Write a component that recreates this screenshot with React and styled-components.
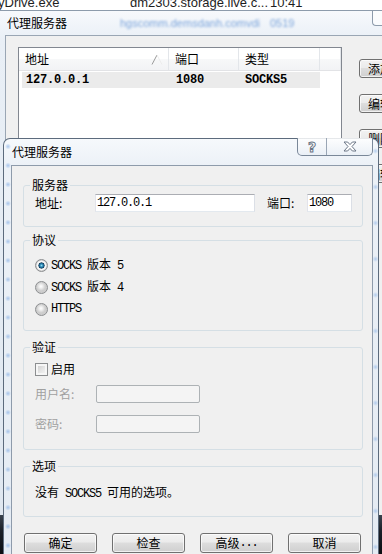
import React from "react";
import styled, { createGlobalStyle } from "styled-components";

const CJK = `"Noto Sans CJK SC", "Microsoft YaHei", sans-serif`;
const MONO = `"Liberation Mono", "Noto Sans CJK SC", monospace`;

const Global = createGlobalStyle`
  html, body { margin: 0; padding: 0; background: #fff; }
  body { font-family: ${CJK}; font-size: 12px; color: #000; }
  * { box-sizing: border-box; }
`;

const Desktop = styled.div`
  position: relative;
  width: 382px;
  height: 554px;
  overflow: hidden;
  background: #fff;
`;

/* ---------- list behind everything ---------- */
const BehindList = styled.div`
  height: 10px;
  overflow: hidden;
  display: grid;
  grid-template-columns: 132px 140px auto;
  margin-left: -2px;
  font-family: "Liberation Sans", Arial, sans-serif;
  font-size: 13px;
  line-height: 15px;
  color: #1e1e1e;
`;
const BehindCell = styled.span`
  display: block;
  margin-top: -5px;
  white-space: nowrap;
`;

/* ---------- back window ---------- */
const BackWindow = styled.div`
  width: 460px;
  height: 505px;
  margin-left: -3px;
  border-top: 1px solid #8d9bab;
  border-left: 1px solid #8d9bab;
  background: linear-gradient(180deg, #f7f9fc 0%, #e9eff6 30px, #dfe7f0 100%);
  padding-left: 7px;
  display: flex;
  flex-direction: column;
`;
const BackTitle = styled.div`
  height: 24px;
  display: grid;
  grid-template-columns: 113px 150px 102px auto;
  align-items: center;
  padding-left: 2px;
`;
const TitleText = styled.span`
  font-family: ${CJK};
  font-size: 12px;
  line-height: 16px;
  color: #000;
  white-space: nowrap;
`;
const BlurText = styled.span`
  font-family: "Liberation Sans", Arial, sans-serif;
  font-size: 11px;
  color: #7fa7dc;
  filter: blur(1.1px);
  white-space: nowrap;
`;
const CaptionStub = styled.span`
  align-self: start;
  width: 30px;
  height: 15px;
  border: 1px solid #8d9bab;
  border-top: none;
  border-right: none;
  border-radius: 0 0 0 4px;
  background: rgba(255, 255, 255, 0.6);
`;
const BackClient = styled.div`
  flex: 1;
  border-top: 1px solid #9aa6b4;
  border-left: 1px solid #9aa6b4;
  background: #f0f0f0;
  padding: 11px 0 0 12px;
  display: flex;
  align-items: flex-start;
  gap: 17px;
`;
const ListView = styled.div`
  width: 324px;
  height: 150px;
  flex: none;
  border: 1px solid #828790;
  background: #fff;
`;
const LvHeader = styled.div`
  display: grid;
  grid-template-columns: 150px 70px 81px 1fr;
  height: 23px;
  border-bottom: 1px solid #e2e3e6;
  background: linear-gradient(180deg, #ffffff 0%, #ffffff 50%, #f7f8f9 50%, #f2f3f5 100%);
`;
const LvHeadCell = styled.div`
  display: flex;
  align-items: center;
  justify-content: space-between;
  padding: 0 5px 0 6px;
  border-right: 1px solid #e3e6ea;
  font-size: 12px;
  line-height: 16px;
`;
const LvRow = styled.div`
  display: grid;
  grid-template-columns: 147px 70px 81px;
  width: 298px;
  height: 16px;
  margin: 1px 0 0 3px;
  background: #ebebeb;
  font-family: ${MONO};
  font-weight: bold;
  font-size: 12px;
  letter-spacing: -0.2px;
  line-height: 16px;
`;
const LvCell = styled.span`
  padding-left: ${(p) => p.$pad}px;
  white-space: nowrap;
`;
const BackButtons = styled.div`
  display: flex;
  flex-direction: column;
  flex: none;
  gap: 16px;
  margin-top: 12px;
`;

const WinButton = styled.div`
  width: ${(p) => p.$w}px;
  height: ${(p) => p.$h}px;
  flex: none;
  border: 1px solid #707070;
  border-radius: 3px;
  background: linear-gradient(180deg, #f2f2f2 0%, #ebebeb 45%, #dddddd 50%, #cfcfcf 100%);
  box-shadow: inset 0 0 0 1px rgba(255, 255, 255, 0.7);
  display: flex;
  align-items: center;
  justify-content: ${(p) => (p.$start ? "flex-start" : "center")};
  padding-left: ${(p) => (p.$start ? 8 : 0)}px;
  font-family: ${CJK};
  font-size: 12px;
  line-height: 16px;
  color: #000;
  white-space: nowrap;
`;

const Taskbar = styled.div`
  height: 39px;
  background: linear-gradient(180deg, #3a434e 0%, #1a2029 40%, #0b0e12 100%);
`;

/* ---------- front dialog ---------- */
const Dialog = styled.div`
  position: absolute;
  left: 3px;
  top: 138px;
  width: 376px;
  height: 430px;
  border: 1px solid #5c6b7d;
  border-bottom: none;
  border-radius: 7px 7px 0 0;
  background:
    radial-gradient(circle, rgba(110, 160, 225, 0.55) 0, rgba(110, 160, 225, 0) 3px) 1px 112px / 6px 19px repeat-y,
    radial-gradient(circle, rgba(110, 160, 225, 0.45) 0, rgba(110, 160, 225, 0) 3px) right 0 top 210px / 5px 36px repeat-y,
    linear-gradient(180deg, #f6f9fc 0%, #ecf1f7 26px, #e4ebf3 100%);
  padding: 0 5px 0 7px;
  display: flex;
  flex-direction: column;
`;
const TitleBar = styled.div`
  height: 26px;
  display: flex;
  justify-content: space-between;
  align-items: flex-start;
`;
const DlgTitle = styled.span`
  padding-left: 1px;
  font-family: ${CJK};
  font-size: 12px;
  line-height: 26px;
  color: #000;
`;
const CaptionButtons = styled.div`
  display: flex;
  height: 18px;
  margin-top: -1px;
  border: 1px solid #7a8899;
  border-top: none;
  border-radius: 0 0 5px 5px;
  overflow: hidden;
  background: linear-gradient(180deg, rgba(255, 255, 255, 0.85), rgba(232, 238, 245, 0.7));
`;
const CapBtn = styled.div`
  width: ${(p) => p.$w}px;
  height: 100%;
  display: flex;
  align-items: center;
  justify-content: center;
  border-left: ${(p) => (p.$divider ? "1px solid #9aa6b5" : "none")};
`;
const HelpGlyph = styled.span`
  font-family: "DejaVu Sans", sans-serif;
  font-weight: bold;
  font-size: 14px;
  line-height: 14px;
  color: #ffffff;
  -webkit-text-stroke: 1px #6b7686;
`;

const Client = styled.div`
  flex: 1;
  border: 1px solid #8e9bab;
  border-bottom: none;
  background: #f0f0f0;
  padding: 12px 9px 0 11px;
  display: flex;
  flex-direction: column;
`;

const Group = styled.fieldset`
  margin: ${(p) => p.$mt}px 0 0 0;
  border: 1px solid #d5dfe5;
  border-radius: 3px;
  padding: ${(p) => p.$pt}px 10px ${(p) => p.$pb}px 11px;
  min-width: 0;
`;
const Legend = styled.legend`
  padding: 0 2px;
  margin-left: -5px;
  font-family: ${CJK};
  font-size: 12px;
  line-height: 14px;
  color: #000;
`;

const FieldRow = styled.div`
  display: flex;
  align-items: center;
  height: ${(p) => p.$h || 18}px;
  margin-top: ${(p) => p.$mt || 0}px;
`;
const Label = styled.span`
  width: ${(p) => p.$w}px;
  flex: none;
  font-family: ${CJK};
  font-size: 12px;
  line-height: 16px;
  color: ${(p) => (p.$disabled ? "#a0a0a0" : "#000")};
  white-space: nowrap;
`;
const Field = styled.div`
  width: ${(p) => p.$w}px;
  height: 18px;
  flex: none;
  border: 1px solid;
  border-color: ${(p) => (p.$disabled ? "#adb2b5" : "#abadb3 #dbdfe6 #e3e9ef #e2e3ea")};
  border-radius: ${(p) => (p.$disabled ? 2 : 0)}px;
  background: ${(p) => (p.$disabled ? "#f4f4f4" : "#fff")};
  padding-left: 1px;
  font-family: ${MONO};
  font-size: 12px;
  letter-spacing: -1.2px;
  line-height: 16px;
  color: #000;
  white-space: nowrap;
`;
const Gap = styled.span`
  width: ${(p) => p.$w}px;
  flex: none;
`;

const Lat = styled.span`
  font-family: ${MONO};
  font-size: 12px;
  letter-spacing: -1.2px;
  white-space: pre;
`;

const OptionRow = styled.div`
  display: flex;
  align-items: center;
  height: 22px;
  font-family: ${CJK};
  font-size: 12px;
  line-height: 16px;
`;
const Radio = styled.span`
  width: 13px;
  height: 13px;
  flex: none;
  margin-right: 3px;
  border-radius: 50%;
  border: 1px solid #8c8e90;
  background: ${(p) =>
    p.$checked
      ? "radial-gradient(circle closest-side at 50% 50%, #8fdcf0 0, #2a86b4 28%, #123f5f 52%, #e9e9e9 60%, #fbfbfb 76%, #c9c9c9 100%)"
      : "radial-gradient(circle closest-side at 45% 40%, #ffffff 0, #ececec 45%, #cdcdcd 100%)"};
`;
const CheckBox = styled.span`
  width: 13px;
  height: 13px;
  flex: none;
  margin-right: 3px;
  border: 1px solid #8c8e90;
  background: linear-gradient(135deg, #c9c9c9 0%, #e6e6e6 55%, #f8f8f8 100%);
  box-shadow: inset 0 0 0 2px #f6f6f6;
`;
const InfoText = styled.div`
  height: 16px;
  font-family: ${CJK};
  font-size: 12px;
  line-height: 16px;
  white-space: nowrap;
`;

const ButtonRow = styled.div`
  display: flex;
  justify-content: space-between;
  margin: 16px 2px 0 1px;
`;

function SortArrow() {
  return (
    <svg width="12" height="11" viewBox="0 0 12 11">
      <line x1="1" y1="10.5" x2="6" y2="1" stroke="#9a9a9a" strokeWidth="1" />
      <line x1="6" y1="1" x2="11" y2="10.5" stroke="#ececec" strokeWidth="1" />
    </svg>
  );
}

function CloseGlyph() {
  return (
    <svg width="14" height="11" viewBox="-1 -1 14 11">
      <polygon
        points="0,0 3.6,0 6,2.6 8.4,0 12,0 8,4.5 12,9 8.4,9 6,6.4 3.6,9 0,9 4,4.5"
        fill="#ffffff"
        stroke="#6b7686"
        strokeWidth="1"
        strokeLinejoin="round"
      />
    </svg>
  );
}

export default function App() {
  return (
    <>
      <Global />
      <Desktop>
        <BehindList>
          <BehindCell>yDrive.exe</BehindCell>
          <BehindCell>dm2303.storage.live.c...</BehindCell>
          <BehindCell>10:41</BehindCell>
        </BehindList>

        <BackWindow>
          <BackTitle>
            <TitleText>代理服务器</TitleText>
            <BlurText>hgscomm.demsdanh.comvdi</BlurText>
            <BlurText>0519</BlurText>
            <CaptionStub />
          </BackTitle>
          <BackClient>
            <ListView>
              <LvHeader>
                <LvHeadCell>
                  <span>地址</span>
                  <SortArrow />
                </LvHeadCell>
                <LvHeadCell>端口</LvHeadCell>
                <LvHeadCell>类型</LvHeadCell>
                <LvHeadCell />
              </LvHeader>
              <LvRow>
                <LvCell $pad={4}>127.0.0.1</LvCell>
                <LvCell $pad={7}>1080</LvCell>
                <LvCell $pad={6}>SOCKS5</LvCell>
              </LvRow>
            </ListView>
            <BackButtons>
              <WinButton $w={80} $h={19} $start>添加...</WinButton>
              <WinButton $w={80} $h={19} $start>编辑...</WinButton>
              <WinButton $w={80} $h={19} $start>删除</WinButton>
              <WinButton $w={80} $h={19} $start>编辑规则</WinButton>
            </BackButtons>
          </BackClient>
        </BackWindow>
        <Taskbar />

        <Dialog>
          <TitleBar>
            <DlgTitle>代理服务器</DlgTitle>
            <CaptionButtons>
              <CapBtn $w={28}>
                <HelpGlyph>?</HelpGlyph>
              </CapBtn>
              <CapBtn $w={46} $divider>
                <CloseGlyph />
              </CapBtn>
            </CaptionButtons>
          </TitleBar>

          <Client>
            <Group $mt={0} $pt={2} $pb={14}>
              <Legend>服务器</Legend>
              <FieldRow>
                <Label $w={60}>地址:</Label>
                <Field $w={160}>127.0.0.1</Field>
                <Gap $w={12} />
                <Label $w={40}>端口:</Label>
                <Field $w={45}>1080</Field>
              </FieldRow>
            </Group>

            <Group $mt={6} $pt={7} $pb={10}>
              <Legend>协议</Legend>
              <OptionRow>
                <Radio $checked />
                <span>
                  <Lat>SOCKS </Lat>版本<Lat> 5</Lat>
                </span>
              </OptionRow>
              <OptionRow>
                <Radio />
                <span>
                  <Lat>SOCKS </Lat>版本<Lat> 4</Lat>
                </span>
              </OptionRow>
              <OptionRow>
                <Radio />
                <Lat>HTTPS</Lat>
              </OptionRow>
            </Group>

            <Group $mt={9} $pt={6} $pb={16}>
              <Legend>验证</Legend>
              <FieldRow>
                <CheckBox />
                <Label $w={40}>启用</Label>
              </FieldRow>
              <FieldRow $mt={7}>
                <Label $w={61} $disabled>用户名:</Label>
                <Field $w={104} $disabled />
              </FieldRow>
              <FieldRow $mt={12}>
                <Label $w={61} $disabled>密码:</Label>
                <Field $w={104} $disabled />
              </FieldRow>
            </Group>

            <Group $mt={9} $pt={11} $pb={16}>
              <Legend>选项</Legend>
              <InfoText>
                没有<Lat> SOCKS5 </Lat>可用的选项。
              </InfoText>
            </Group>

            <ButtonRow>
              <WinButton $w={73} $h={20}>确定</WinButton>
              <WinButton $w={73} $h={20}>检查</WinButton>
              <WinButton $w={73} $h={20}>
                高级<Lat>...</Lat>
              </WinButton>
              <WinButton $w={73} $h={20}>取消</WinButton>
            </ButtonRow>
          </Client>
        </Dialog>
      </Desktop>
    </>
  );
}
